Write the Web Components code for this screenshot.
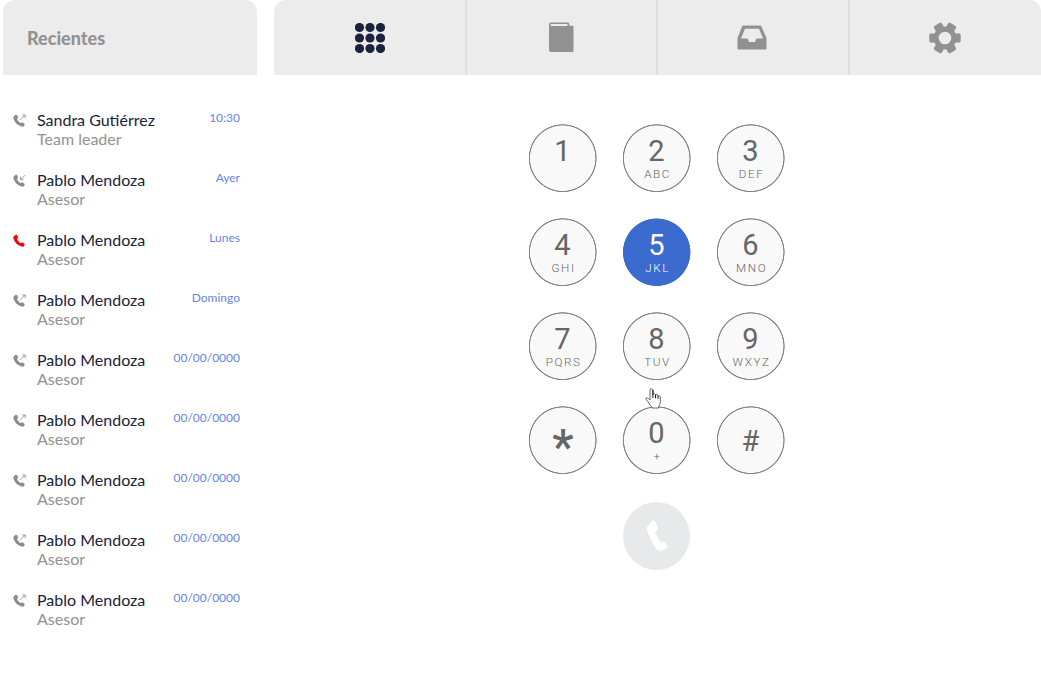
<!DOCTYPE html>
<html lang="es"><head><meta charset="utf-8"><title>Recientes</title>
<style>html,body{margin:0;height:100%;overflow:hidden;background:#fff}body{font-family:Lato,sans-serif}</style></head>
<body><phone-app></phone-app>
<script>
const define=(name,html)=>customElements.define(name,class extends HTMLElement{
  constructor(){super();this.attachShadow({mode:'open'}).innerHTML=typeof html==='function'?html(this):html;}
});
const handset='M1 1.4 2.6.3Q3.4-.1 3.8.6L4.8 2.8Q5 3.4 4.5 3.8L3.8 4.6Q4.6 7.2 7.3 8.7L8.3 8Q8.8 7.6 9.4 8L11.2 9.3Q11.8 9.8 11.4 10.4L10.5 11.7Q10 12.3 9.2 12.2Q2.2 11 .1 3.6Q-.1 2.2 1 1.4Z';

define('call-icon',el=>{
  const k=el.getAttribute('kind');
  const arrow=k==='out'?'<path d="M7.1 5.4 11.8.7M9 .6H12V3.6" fill="none" stroke="#919191" stroke-width=".9"/>'
    :k==='in'?'<path d="M12 .6 7.5 5.1M7.4 2.2V5.2H10.4" fill="none" stroke="#919191" stroke-width=".9"/>':'';
  return `<style>:host{display:block;width:14px;height:14px}svg{display:block}</style>
  <svg width="14" height="14" viewBox="-.2 -.5 14 14"><path d="${handset}" fill="${k==='missed'?'#fb0007':'#8c8c8c'}"/>${arrow}</svg>`;});

define('recent-call',el=>`<style>
:host{display:grid;grid-template-columns:24px 1fr auto;height:60px;box-sizing:border-box;padding:0 17px 0 10px}
call-icon{margin-top:4px}
.name{font-size:16px;line-height:19px;color:#19233c;white-space:nowrap}
.role{font-size:16px;line-height:19px;color:#929292}
.when{font-size:12px;line-height:15px;color:#6585e6}
</style><call-icon kind="${el.getAttribute('kind')}"></call-icon>
<div><div class="name"><slot></slot></div><div class="role"><slot name="role"></slot></div></div>
<div class="when"><slot name="when"></slot></div>`);

define('recent-list',`<style>
:host{display:block;width:254px;flex:none}
header{height:75px;box-sizing:border-box;padding:27px 24px;border-radius:12px 12px 0 0;background:#ececec;color:#929292;font-weight:900;font-size:18px;line-height:23px}
main{padding-top:35px}
</style><header>Recientes</header><main><slot></slot></main>`);

define('tab-bar',`<style>
:host{display:grid;grid-template-columns:193px 191px 192px 191px;height:75px;border-radius:12px 12px 0 0;background:#ececec;overflow:hidden}
div{display:flex;align-items:center;justify-content:center;border-right:2px solid #dedede;box-sizing:border-box}
div:nth-child(n+3){padding-right:2px}
div:last-child{border:0}svg{display:block}
</style>
<div><svg width="30" height="30" fill="#19233c">${[4.5,15,25.5].map(y=>[4.5,15,25.5].map(x=>`<circle cx="${x}" cy="${y}" r="4.6"/>`).join('')).join('')}</svg></div>
<div><svg width="26" height="32" viewBox="-.5 0 26 32" fill="#919191"><path fill-rule="evenodd" d="M2.2 .5H19.5Q20.7.5 20.7 1.7V3.8H24Q25 3.8 25 5V29Q25 30 24 30H3Q.5 30 .5 27.5V2.5Q.5.5 2.2.5ZM2.2 2V4H19V2Z"/></svg></div>
<div><svg width="30" height="26" fill="#919191"><path fill-rule="evenodd" d="M6 .5H23Q24 .5 24.4 1.5L29.5 13V23.5Q29.5 24.5 28.5 24.5H1.5Q.5 24.5 .5 23.5V13L5 1.5Q5.3.5 6 .5ZM8 3.7 4 13.6H10.5L12 17H18L19.5 13.6H26L22 3.7Z"/></svg></div>
<div><svg width="32" height="32" viewBox="-16 -16 32 32" fill="#919191"><path id="g" fill-rule="evenodd"/></svg></div>`);

define('dial-key',el=>`<style>
:host{display:flex;flex-direction:column;align-items:center;width:68px;height:68px;box-sizing:border-box;padding-top:10px;background:radial-gradient(circle at 33.7px 34.2px,#f9f9f9 32.4px,#858585 33px,#858585 33.6px,transparent 34.2px);color:#666;font-family:Roboto,sans-serif}
:host([active]){background:radial-gradient(circle at 33.7px 34.2px,#3b6bce 33.4px,transparent 34.1px);color:#fff}
.n{font-size:29px;line-height:34px;margin-left:-1px}
.s{font-size:11.7px;line-height:14px;font-weight:300;letter-spacing:1.6px;margin:-1px -1.2px 0 0}
:host([hash]) .n{margin-top:8px}
:host([star]) .n{font-size:48px;line-height:54px;margin:4px 0 0;font-weight:500}
</style><div class="n"><slot></slot></div><div class="s"><slot name="letters"></slot></div>`);

define('call-button',`<style>:host{display:flex;align-items:center;justify-content:center;width:67px;height:68px;border-radius:50%;background:#e8e9eb}</style>
<svg width="22" height="32" viewBox="-.5 0 22 32" fill="#fff"><path d="M.5 7 4.5 2Q7-.8 8.8 2L11.5 7.5Q12.2 9.5 10 11L8.5 13L14 22L17 21.5Q19 21.5 20 24L21 26Q21.5 28 19 29L15 30.5Q11.5 31.5 9 28Q4 20 .5 10Q-.3 8.2.5 7Z"/></svg>`);

define('hand-cursor',`<style>:host{display:block;width:17px;height:21px}svg{display:block}</style>
<svg width="17" height="21" viewBox="0 0 17 21"><path d="M5 12V2.2Q5 .7 6.4.7T8 2.2V6.5Q8.2 5.2 9.4 5.5T10.5 7Q10.8 6 12 6.4T13 8Q14 7.3 14.8 8T15.3 10V14Q15.2 16.5 13.6 18.5V20H6.8V18.8Q4.5 16.8 3 13.8L.8 11.2Q.7 9.5 2.4 9.8Q3.5 10.2 5 12Z" fill="#fff" stroke="#555" stroke-width=".9"/><path d="M7.9 2V10M10.5 7V10.3M13 8V10.8" stroke="#111" fill="none"/></svg>`);

define('dial-pad',`<style>
:host{display:grid;grid-template-columns:repeat(3,68px);gap:26px;justify-content:center;padding-top:49px;position:relative;width:256px;margin:0 auto}
call-button{grid-column:2;margin-top:2px}
hand-cursor{position:absolute;left:116px;top:313px}
</style><slot></slot><call-button></call-button><hand-cursor></hand-cursor>`);

define('phone-app',()=>{
  const calls=[['out','Sandra Gutiérrez','Team leader','10:30'],['in','Pablo Mendoza','Asesor','Ayer'],['missed','Pablo Mendoza','Asesor','Lunes'],['out','Pablo Mendoza','Asesor','Domingo'],...Array(5).fill(['out','Pablo Mendoza','Asesor','00/00/0000'])];
  const keys=[['1',''],['2','ABC'],['3','DEF'],['4','GHI'],['5','JKL','active'],['6','MNO'],['7','PQRS'],['8','TUV'],['9','WXYZ'],['*','','star'],['0','+'],['#','','hash']];
  return `<style>:host{display:flex;gap:17px;padding-left:3px;height:682px;box-sizing:border-box}.panel{width:767px;flex:none}.body{padding-right:1px}</style>
  <recent-list>${calls.map(c=>`<recent-call kind="${c[0]}">${c[1]}<span slot="role">${c[2]}</span><span slot="when">${c[3]}</span></recent-call>`).join('')}</recent-list>
  <div class="panel"><tab-bar></tab-bar><div class="body"><dial-pad>${keys.map(k=>`<dial-key ${k[2]||''}>${k[0]}<span slot="letters">${k[1]}</span></dial-key>`).join('')}</dial-pad></div></div>`;});

/* Six rounded teeth around a ring. */
const pt=(r,a)=>(r*Math.cos(a*Math.PI/180)).toFixed(2)+' '+(r*Math.sin(a*Math.PI/180)).toFixed(2);
let d='';
for(let a=0;a<360;a+=60)d+=(a?'L':'M')+pt(11.8,a-22)+'L'+pt(14.2,a-19)+'Q'+pt(16.2,a-17)+' '+pt(16,a-11)+'L'+pt(16,a+11)+'Q'+pt(16.2,a+17)+' '+pt(14.2,a+19)+'L'+pt(11.8,a+22)+'Q'+pt(10.8,a+30)+' '+pt(11.8,a+38);
d+='ZM6.3 0A6.3 6.3 0 1 0-6.3 0A6.3 6.3 0 1 0 6.3 0Z';
document.querySelector('phone-app').shadowRoot.querySelector('tab-bar').shadowRoot.querySelector('#g').setAttribute('d',d);
</script></body></html>
